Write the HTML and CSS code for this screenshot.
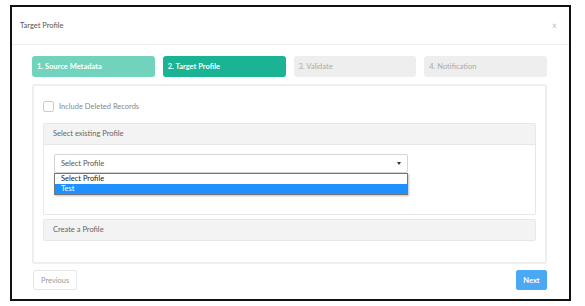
FILE: index.html
```html
<!DOCTYPE html>
<html>
<head>
    <title>Target Profile</title>
    <link rel="stylesheet" href="styles.css">
</head>
<body>
    <div class="modal">
        <div class="modal-header">
            <span class="modal-title">Target Profile</span>
            <span class="close">&times;</span>
        </div>
        <div class="modal-body">
            <!-- wizard steps -->
            <div class="steps">
                <div class="step done">1. Source Metadata</div>
                <div class="step current">2. Target Profile</div>
                <div class="step">3. Validate</div>
                <div class="step">4. Notification</div>
            </div>

            <div class="content">
                <label class="check-row">
                    <span class="checkbox"></span>
                    Include Deleted Records
                </label>

                <div class="panel">
                    <div class="panel-heading">Select existing Profile</div>
                    <div class="panel-body">
                        <div class="select-wrap">
                            <div class="select">
                                <span>Select Profile</span>
                                <span class="caret"></span>
                            </div>
                            <ul class="options">
                                <li>Select Profile</li>
                                <li class="active">Test</li>
                            </ul>
                        </div>
                    </div>
                </div>

                <div class="panel">
                    <div class="panel-heading">Create a Profile</div>
                </div>
            </div>

            <div class="footer">
                <button class="btn">Previous</button>
                <button class="btn btn-primary">Next</button>
            </div>
        </div>
    </div>
</body>
</html>
```
FILE: styles.css
```css
* { box-sizing: border-box; }
body { margin: 0; padding: 5px 14px 0 10px; background: white; font-family: Lato, "Open Sans", sans-serif; font-size: 7.5px; color: #676a6c; }
.modal { border: 2px solid #111; height: 296px; background: white; }

.modal-header { display: flex; justify-content: space-between; align-items: center; height: 38px; padding: 0 8px; border-bottom: 1px solid #eeeeee; }
.modal-title { color: #555; font-size: 7.5px; }
.close { color: #bbb; font-size: 9px; margin-right: 4px; }

.modal-body { padding: 11px 22px 0 20px; }

.steps { display: grid; grid-template-columns: repeat(4, 1fr); gap: 8px; }
.step {
    height: 21px;
    line-height: 21px;
    padding: 0 5px;
    border-radius: 3px;
    background-color: #eeeeee;
    color: #aaaaaa;
}
.step.done { background-color: #72d3bd; color: white; font-weight: bold; }
.step.current { background-color: #1ab394; color: white; font-weight: bold; }

.content { margin-top: 7px; border: 2px solid #eeeeee; border-radius: 3px; padding: 15px 9px 21px 9px; }

.check-row { display: flex; align-items: center; gap: 5px; color: #888; }
.checkbox { width: 11px; height: 11px; border: 1px solid #ccc; border-radius: 2px; background: white; }

.panel { border: 1px solid #e7e7e7; border-radius: 2px; margin-top: 11px; }
.panel + .panel { margin-top: 4px; }
.panel-heading { height: 20px; line-height: 20px; padding: 0 9px; background-color: #f3f3f3; color: #666; }
.panel-body { height: 70px; padding: 9px 10px 0 10px; border-top: 1px solid #e7e7e7; }

.select-wrap { position: relative; width: 354px; }
.select {
    display: flex;
    justify-content: space-between;
    align-items: center;
    height: 19px;
    padding: 0 6px;
    border: 1px solid #d5d5d5;
    border-radius: 2px;
    color: #555;
}
.caret { width: 0; height: 0; border-left: 2.5px solid transparent; border-right: 2.5px solid transparent; border-top: 3px solid #333; }

.options {
    position: absolute;
    left: 0;
    top: 19px;
    width: 354px;
    margin: 0;
    padding: 0;
    list-style: none;
    border: 1px solid #767676;
    background: white;
    box-shadow: 1px 1px 2px rgba(0,0,0,0.25);
    color: #222;
}
.options li { height: 10px; line-height: 10px; padding: 0 6px; }
.options li.active { background-color: #1e90ff; color: white; }

.footer { display: flex; justify-content: space-between; margin-top: 6px; padding-left: 1px; }
.btn {
    height: 20px;
    padding: 0 7px;
    border: 1px solid #e7e7e7;
    border-radius: 2px;
    background: white;
    color: #999;
    font-family: inherit;
    font-size: 7.5px;
}
.btn-primary { background-color: #4aa8f5; border-color: #4aa8f5; color: white; font-weight: bold; width: 31px; padding: 0; }
```
